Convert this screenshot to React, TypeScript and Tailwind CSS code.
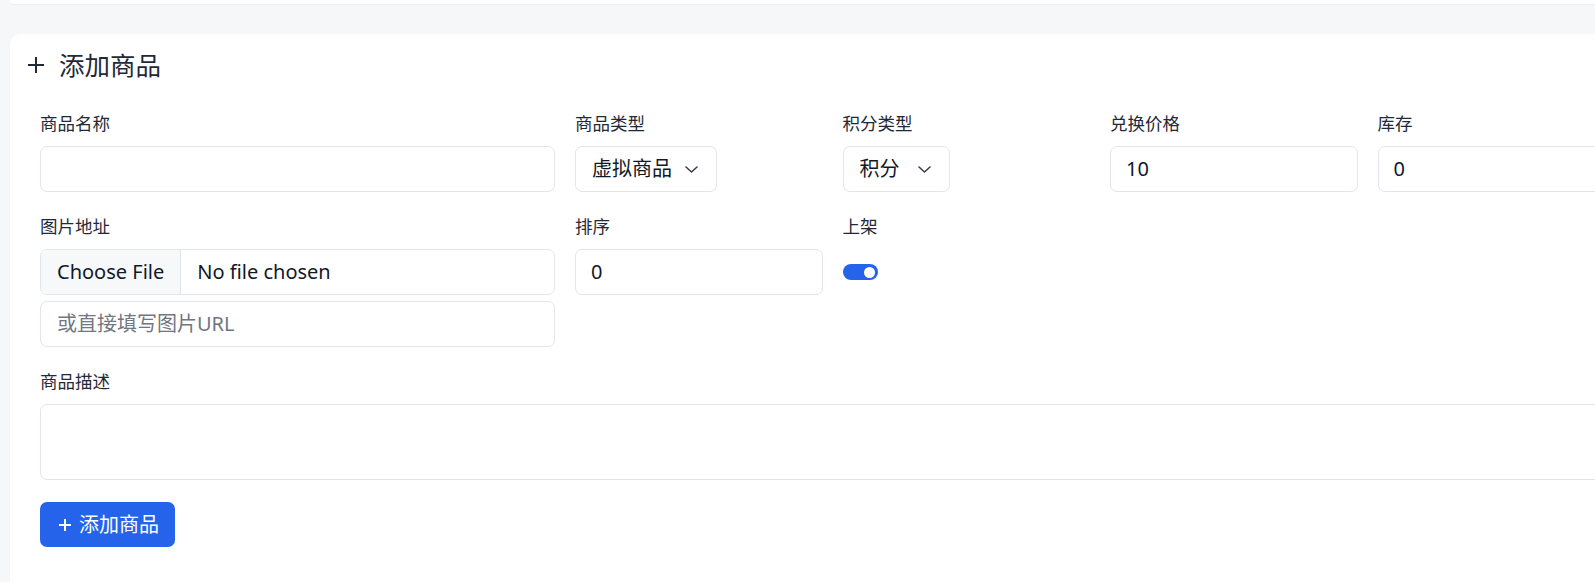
import React from "react";

const FONT = '"Noto Sans", "Noto Sans CJK SC", sans-serif';

function Chevron() {
  return (
    <svg width="13" height="7" viewBox="0 0 13 7" fill="none" className="shrink-0">
      <path d="M1 1l5.5 5 5.5-5" stroke="#374151" strokeWidth="1.6" strokeLinecap="round" strokeLinejoin="round" />
    </svg>
  );
}

function Plus({ size, color, sw }: { size: number; color: string; sw: number }) {
  return (
    <svg width={size} height={size} viewBox={`0 0 ${size} ${size}`} fill="none" className="shrink-0">
      <path d={`M${size / 2} 0V${size}M0 ${size / 2}H${size}`} stroke={color} strokeWidth={sw} />
    </svg>
  );
}

function Label({ children }: { children: React.ReactNode }) {
  return <div className="text-[17.5px] leading-[25px] mb-[10px] text-[#1f2937]">{children}</div>;
}

function Box({ children, className = "" }: { children?: React.ReactNode; className?: string }) {
  return (
    <div
      className={`h-[46px] border border-[#e3e5ea] rounded-[7px] bg-white flex items-center text-[20px] text-[#111827] ${className}`}
    >
      {children}
    </div>
  );
}

export default function App() {
  return (
    <div className="w-screen h-screen overflow-hidden bg-[#f6f7f9]" style={{ fontFamily: FONT }}>
      <div className="w-[1740px] pl-[10px]">
        <div className="h-[4px] bg-white rounded-b-[10px] shadow-[0_1px_2px_rgba(0,0,0,0.04)]" />
        <div className="mt-[30px] bg-white rounded-[10px] pb-[60px] shadow-[0_1px_2px_rgba(0,0,0,0.04)]">
          <div className="pt-[13px] pl-[18px] h-[48px] flex items-center">
            <Plus size={16} color="#1f2937" sw={2} />
            <span className="ml-[15px] text-[25.5px] leading-[34px] text-[#1f2937]">添加商品</span>
          </div>
          <div className="mt-[29px] pl-[30px] grid grid-cols-[repeat(6,247.5px)] gap-x-[20px] gap-y-[22px]">
            <div className="col-span-2">
              <Label>商品名称</Label>
              <Box />
            </div>
            <div>
              <Label>商品类型</Label>
              <Box className="w-[142px] pl-[16px] pr-[18px] justify-between">
                <span>虚拟商品</span>
                <Chevron />
              </Box>
            </div>
            <div>
              <Label>积分类型</Label>
              <Box className="w-[107px] pl-[16px] pr-[18px] justify-between">
                <span>积分</span>
                <Chevron />
              </Box>
            </div>
            <div>
              <Label>兑换价格</Label>
              <Box className="px-[15px]">10</Box>
            </div>
            <div>
              <Label>库存</Label>
              <Box className="px-[15px]">0</Box>
            </div>

            <div className="col-span-2">
              <Label>图片地址</Label>
              <Box className="overflow-hidden">
                <div className="h-full flex items-center px-[16px] bg-[#f7f8fa] border-r border-[#e3e5ea]">
                  Choose File
                </div>
                <div className="pl-[16px]">No file chosen</div>
              </Box>
              <Box className="mt-[6px] px-[16px] text-[#717680]">或直接填写图片URL</Box>
            </div>
            <div>
              <Label>排序</Label>
              <Box className="px-[15px]">0</Box>
            </div>
            <div>
              <Label>上架</Label>
              <div className="h-[46px] flex items-center">
                <div className="w-[35px] h-[16px] rounded-full bg-[#2563eb] flex items-center justify-end pr-[3px]">
                  <div className="w-[11px] h-[11px] rounded-full bg-white" />
                </div>
              </div>
            </div>
            <div />
            <div />

            <div className="col-span-6">
              <Label>商品描述</Label>
              <div className="h-[76px] border border-[#e3e5ea] rounded-[7px] bg-white" />
            </div>

            <div className="col-span-6">
              <button className="h-[45px] pl-[19px] pr-[16px] rounded-[7px] bg-[#2563eb] text-white text-[20px] inline-flex items-center gap-[8px]">
                <Plus size={12} color="#ffffff" sw={2} />
                <span>添加商品</span>
              </button>
            </div>
          </div>
        </div>
      </div>
    </div>
  );
}
